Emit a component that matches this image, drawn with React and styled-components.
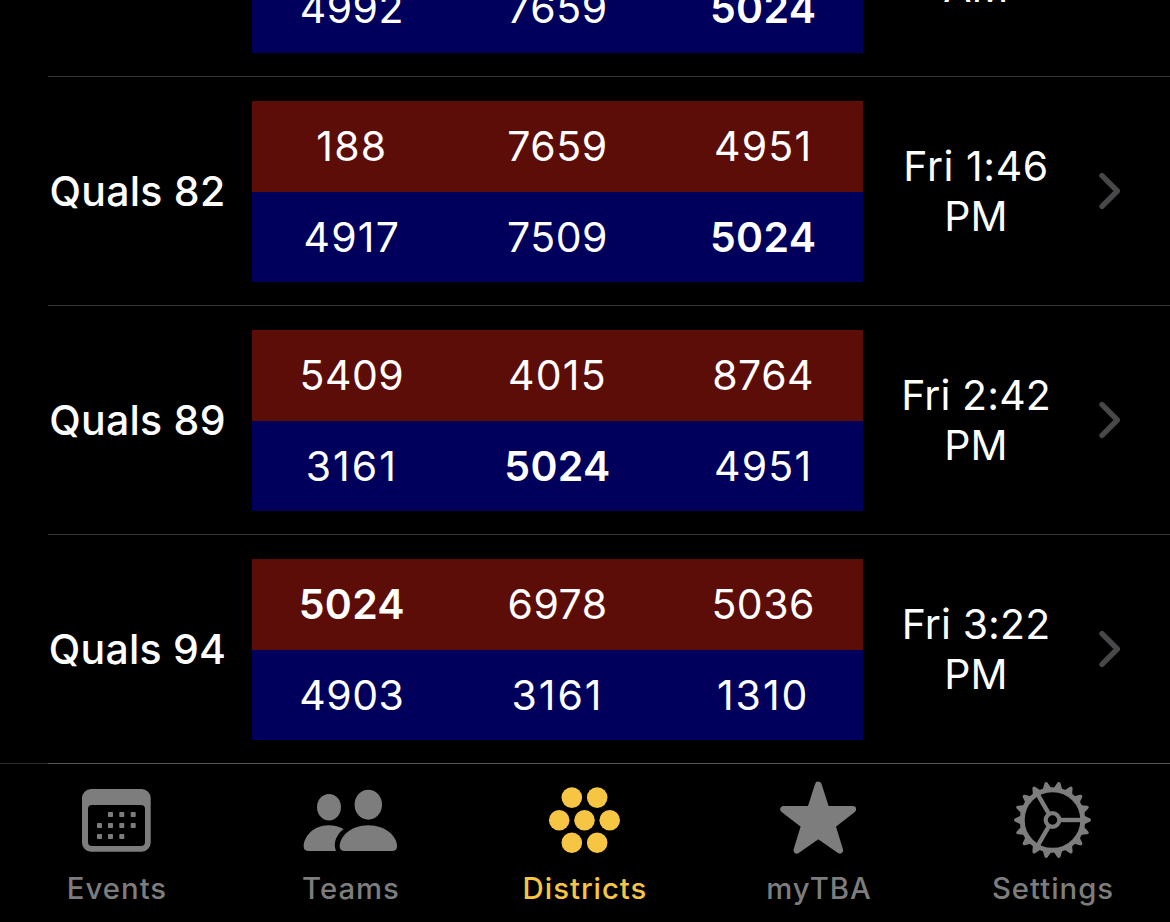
import React from 'react';
import styled, { createGlobalStyle } from 'styled-components';

const GlobalStyle = createGlobalStyle`
  * { box-sizing: border-box; }
  body {
    margin: 0;
    background: #000;
    color: #fff;
    font-family: Inter, "Liberation Sans", sans-serif;
    overflow: hidden;
  }
`;

const Screen = styled.div`
  display: flex;
  flex-direction: column;
  width: 1170px;
  height: 922px;
  background: #000;
  overflow: hidden;
`;

const MatchList = styled.main`
  display: flex;
  flex-direction: column;
  justify-content: flex-end;
  flex: none;
  height: 764px;
  padding-left: 48px;
  overflow: hidden;
`;

const MatchRow = styled.div`
  display: flex;
  align-items: center;
  flex: none;
  height: 229px;
  padding: 24px 0 23px;
  border-bottom: 1px solid #373739;
`;

const MatchLabel = styled.div`
  width: 180px;
  margin-right: 24px;
  padding-bottom: 2px;
  text-align: center;
  font-size: 41px;
  font-weight: 500;
  letter-spacing: 0.25px;
  text-indent: -1px;
  line-height: 50px;
  white-space: nowrap;
`;

const Alliances = styled.div`
  display: flex;
  flex-direction: column;
  width: 611px;
  height: 181px;
`;

const Alliance = styled.div`
  display: grid;
  grid-template-columns: repeat(3, 1fr);
  column-gap: 6px;
  align-items: center;
  height: ${(p) => (p.$side === 'red' ? 91 : 90)}px;
  padding-bottom: ${(p) => (p.$side === 'red' ? 1 : 0)}px;
  background: ${(p) => (p.$side === 'red' ? '#5c0d08' : '#00005c')};
`;

const Team = styled.span`
  text-align: center;
  font-size: 41px;
  line-height: 50px;
  font-weight: ${(p) => (p.$highlight ? 600 : 400)};
  letter-spacing: ${(p) => (p.$highlight ? 0.3 : 0.5 + 0.75 * p.$ones)}px;
`;

const Time = styled.div`
  width: 178px;
  margin-left: 24px;
  padding-bottom: 2px;
  text-align: center;
  font-size: 41px;
`;

const TimeLine = styled.div`
  height: 50px;
  line-height: 50px;
  white-space: nowrap;
  letter-spacing: ${(p) => 0.1 + 0.45 * p.$ones}px;
`;

const Chevron = styled.svg`
  width: 22px;
  height: 38px;
  margin: 0 0 1px 34px;
`;

const TabBar = styled.nav`
  display: grid;
  grid-template-columns: repeat(5, 1fr);
  position: relative;
  flex: none;
  height: 159px;
  margin-top: -1px;
  border-top: 1px solid rgba(255, 255, 255, 0.17);
`;

const Tab = styled.div`
  display: flex;
  flex-direction: column;
  align-items: center;
  padding-top: 15px;
  color: ${(p) => (p.$active ? '#f7c544' : '#7d7d7d')};
`;

const TabIcon = styled.svg`
  width: 100px;
  height: 80px;
  fill: currentColor;
`;

const TabLabel = styled.span`
  margin-top: 11px;
  font-size: 29.3px;
  font-weight: 450;
  line-height: 38px;
  letter-spacing: 1px;
`;

function EventsIcon() {
  const dots = [[41, 33], [52.3, 33], [63.7, 33], [30, 44], [41, 44], [52.3, 44], [63.7, 44], [30, 55], [41, 55], [52.3, 55]];
  return (
    <TabIcon viewBox="0 0 100 80">
      <path
        fillRule="evenodd"
        d="M24 10H74.7a9 9 0 0 1 9 9V63.7a9 9 0 0 1-9 9H24a9 9 0 0 1-9-9V19a9 9 0 0 1 9-9ZM25 26a4 4 0 0 0-4 4V63a4 4 0 0 0 4 4H74a4 4 0 0 0 4-4V30a4 4 0 0 0-4-4Z"
      />
      {dots.map(([x, y]) => <rect key={`${x}-${y}`} x={x} y={y} width="5" height="5" rx="0.8" />)}
    </TabIcon>
  );
}

function TeamsIcon() {
  return (
    <TabIcon viewBox="0 0 100 80">
      <ellipse cx="28" cy="28.2" rx="12" ry="13.2" />
      <ellipse cx="67.3" cy="25.7" rx="13.7" ry="15" />
      <path d="M43 71.9Q38.7 71.9 38.7 67C38.7 58 49.3 46.3 67.3 46.3C85.4 46.3 96 58 96 67Q96 71.9 91.7 71.9Z" />
      <path d="M7 71.9Q2.7 71.9 2.7 67.5C2.7 58 12 46.3 27.5 46.3C33.6 46.3 38.6 47.9 42.7 50.1C36 55 31.5 64 35 71.9Z" />
    </TabIcon>
  );
}

function DistrictsIcon() {
  const dots = [[36.8, 18.6], [62.2, 18.6], [24.2, 41.3], [49.5, 41.3], [74.7, 41.3], [36.8, 63.8], [62.2, 63.8]];
  return (
    <TabIcon viewBox="0 0 100 80">
      {dots.map(([x, y]) => <circle key={`${x}-${y}`} cx={x} cy={y} r="10.3" />)}
    </TabIcon>
  );
}

function StarIcon() {
  return (
    <TabIcon viewBox="0 0 100 80">
      <path
        d="M49.3 5.8L57.2 30.3H83.8L63.2 46.4L70.8 71.3L49.3 56.2L27.8 71.3L35.4 46.4L14.6 30.3H41.4Z"
        stroke="currentColor"
        strokeWidth="6.6"
        strokeLinejoin="round"
      />
    </TabIcon>
  );
}

function GearIcon() {
  const teeth = Array.from({ length: 18 }, (_, i) => i * 20);
  return (
    <TabIcon viewBox="0 0 100 80">
      <g transform="translate(49.5 41)">
        {teeth.map((a) => (
          <path key={a} transform={`rotate(${a})`} d="M31 -4.4L33 -3.7L37.2 -1.7Q38.5 -1.2 38.5 0Q38.5 1.2 37.2 1.7L33 3.7L31 4.4Z" />
        ))}
        <g fill="none" stroke="currentColor">
          <circle r="30.3" strokeWidth="5" />
          <circle r="6.8" strokeWidth="4.2" />
          {[0, 120, 240].map((a) => <path key={a} transform={`rotate(${a})`} d="M8 0H29" strokeWidth="4.4" />)}
        </g>
      </g>
    </TabIcon>
  );
}

const matches = [
  { label: '', red: [], blue: ['4992', '7659', '5024'], time: ['', 'AM'] },
  { label: 'Quals 82', red: ['188', '7659', '4951'], blue: ['4917', '7509', '5024'], time: ['Fri 1:46', 'PM'] },
  { label: 'Quals 89', red: ['5409', '4015', '8764'], blue: ['3161', '5024', '4951'], time: ['Fri 2:42', 'PM'] },
  { label: 'Quals 94', red: ['5024', '6978', '5036'], blue: ['4903', '3161', '1310'], time: ['Fri 3:22', 'PM'] },
];

const tabs = [
  { name: 'Events', Icon: EventsIcon },
  { name: 'Teams', Icon: TeamsIcon },
  { name: 'Districts', Icon: DistrictsIcon, active: true },
  { name: 'myTBA', Icon: StarIcon },
  { name: 'Settings', Icon: GearIcon },
];

const FOLLOWED_TEAM = '5024';

// The digit 1 is narrow, so strings that contain it get looser tracking.
const countOnes = (text) => text.split('1').length - 1;

function AllianceRow({ side, teams }) {
  return (
    <Alliance $side={side}>
      {teams.map((team) => (
        <Team key={team} $highlight={team === FOLLOWED_TEAM} $ones={countOnes(team)}>{team}</Team>
      ))}
    </Alliance>
  );
}

export default function App() {
  return (
    <Screen>
      <GlobalStyle />
      <MatchList>
        {matches.map((m, i) => (
          <MatchRow key={i}>
            <MatchLabel>{m.label}</MatchLabel>
            <Alliances>
              <AllianceRow side="red" teams={m.red} />
              <AllianceRow side="blue" teams={m.blue} />
            </Alliances>
            <Time>
              {m.time.map((line, j) => <TimeLine key={j} $ones={countOnes(line)}>{line}</TimeLine>)}
            </Time>
            <Chevron viewBox="0 0 22 38">
              <path d="M3 3.7L18.3 19L3 34.3" fill="none" stroke="#48484b" strokeWidth="5.4" strokeLinecap="round" strokeLinejoin="round" />
            </Chevron>
          </MatchRow>
        ))}
      </MatchList>
      <TabBar>
        {tabs.map(({ name, Icon, active }) => (
          <Tab key={name} $active={active}>
            <Icon />
            <TabLabel>{name}</TabLabel>
          </Tab>
        ))}
      </TabBar>
    </Screen>
  );
}
